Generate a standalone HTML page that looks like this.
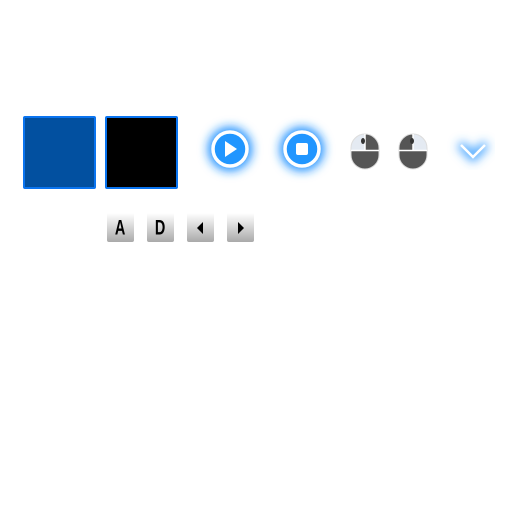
<!DOCTYPE html><html><head><style>
body{margin:0;width:512px;height:512px;background:#fff;position:relative;overflow:hidden;font-family:"Liberation Sans",sans-serif}
.a{position:absolute}
.sq{box-sizing:border-box;border:2px solid #0a74f0;width:73px;height:73px;top:116px;border-radius:2px}
.k{top:213px;width:27px;height:29px;background:linear-gradient(#fff,#e6e6e6 30%,#a9a9a9);border-radius:2px;text-align:center;overflow:hidden}
.k span{display:inline-block;font:bold 17px/29px "Liberation Sans",sans-serif;color:#000;transform:scale(.85,1.25)}
</style></head><body>
<div class="a sq" style="left:23px;background:#0250a0"></div>
<div class="a sq" style="left:105px;background:#000"></div>
<svg class="a" style="left:195px;top:115px" width="300" height="70" viewBox="195 115 300 70">
<defs><filter id="g" x="-1" y="-1" width="3" height="3"><feGaussianBlur stdDeviation="5"/></filter>
<clipPath id="m1"><rect x="351" y="134" width="28" height="35" rx="14"/></clipPath>
<clipPath id="m2"><rect x="399" y="134" width="28" height="35" rx="14"/></clipPath></defs>
<circle cx="230" cy="149" r="22" fill="#1a90ff" filter="url(#g)"/>
<circle cx="230" cy="149" r="17" fill="#2196ff" stroke="#fff" stroke-width="3.5"/>
<path d="M225 141 L237 149 L225 157Z" fill="#fff"/>
<circle cx="302" cy="149" r="22" fill="#1a90ff" filter="url(#g)"/>
<circle cx="302" cy="149" r="17" fill="#2196ff" stroke="#fff" stroke-width="3.5"/>
<rect x="296" y="143" width="12" height="12" rx="2" fill="#fff"/>
<g clip-path="url(#m1)"><rect x="351" y="134" width="28" height="35" fill="#555"/><rect x="351" y="134" width="14" height="16" fill="#e4eaf2"/></g>
<rect x="351" y="134" width="28" height="35" rx="14" fill="none" stroke="#ddd" stroke-width="1"/>
<path d="M351 150.5 H379 M365 134 V150" stroke="#fff" stroke-width="1.5"/>
<ellipse cx="363" cy="141" rx="2" ry="3" fill="#333"/>
<g clip-path="url(#m2)"><rect x="399" y="134" width="28" height="35" fill="#555"/><rect x="413" y="134" width="14" height="16" fill="#e4eaf2"/></g>
<rect x="399" y="134" width="28" height="35" rx="14" fill="none" stroke="#ddd" stroke-width="1"/>
<path d="M399 150.5 H427 M413 134 V150" stroke="#fff" stroke-width="1.5"/>
<ellipse cx="412" cy="141" rx="2" ry="3" fill="#333"/>
<path d="M460 144 L473 157 L486 144" stroke="#3a9fff" stroke-width="8" fill="none" filter="url(#g)"/>
<path d="M461 145 L473 157 L485 145" stroke="#fff" stroke-width="2.5" fill="none"/>
</svg>
<div class="a k" style="left:107px"><span>A</span></div>
<div class="a k" style="left:147px"><span>D</span></div>
<div class="a k" style="left:187px"><svg width="27" height="29"><path d="M16 9 L10 15 L16 21Z"/></svg></div>
<div class="a k" style="left:227px"><svg width="27" height="29"><path d="M11 9 L17 15 L11 21Z"/></svg></div>
</body></html>
